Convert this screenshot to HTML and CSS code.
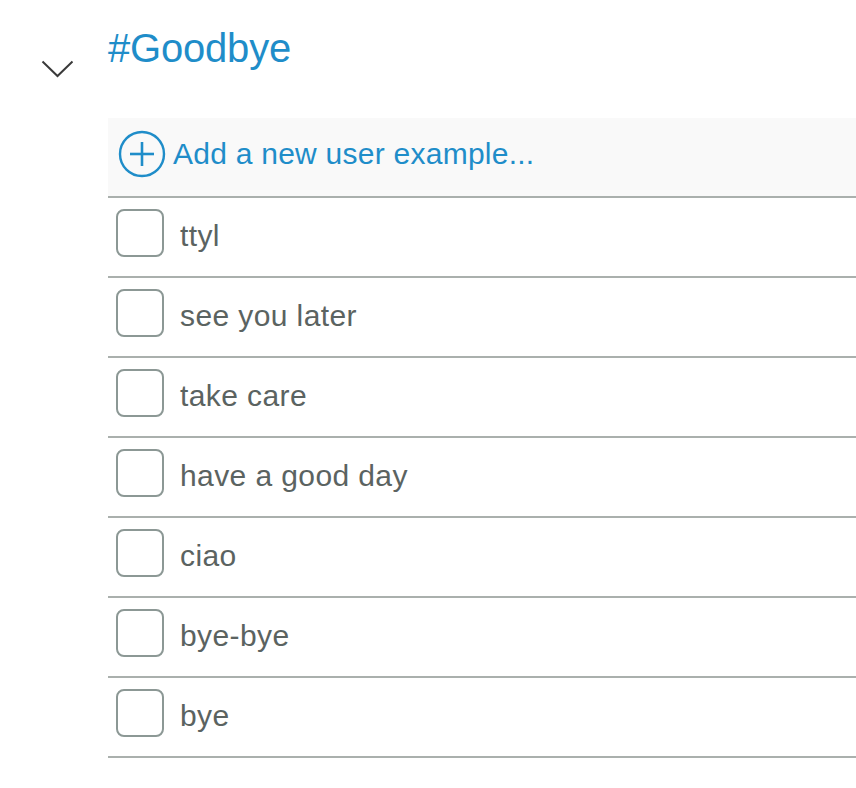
FILE: index.html
```html
<!DOCTYPE html>
<html lang="en">
<head>
<meta charset="utf-8">
<title>#Goodbye</title>
<link rel="stylesheet" href="styles.css">
</head>
<body>
<div class="intent">
  <div class="toggle">
    <svg class="chevron" width="33" height="18" viewBox="0 0 33 18" aria-hidden="true">
      <polyline points="1.5,1.5 16.5,16 31.5,1.5" fill="none" stroke="#3a3a3a" stroke-width="2"/>
    </svg>
  </div>
  <div class="content">
    <h1 class="title">#Goodbye</h1>
    <div class="add-row">
      <svg class="plus" width="48" height="48" viewBox="0 0 48 48" aria-hidden="true">
        <circle cx="24" cy="24" r="22" fill="none" stroke="#1f8dc9" stroke-width="2.4"/>
        <line x1="12" y1="24" x2="36" y2="24" stroke="#1f8dc9" stroke-width="2.6"/>
        <line x1="24" y1="12" x2="24" y2="36" stroke="#1f8dc9" stroke-width="2.6"/>
      </svg>
      <span class="add-label">Add a new user example...</span>
    </div>
    <ul class="examples">
      <li class="example"><span class="check"></span><span class="label">ttyl</span></li>
      <li class="example"><span class="check"></span><span class="label">see you later</span></li>
      <li class="example"><span class="check"></span><span class="label">take care</span></li>
      <li class="example"><span class="check"></span><span class="label">have a good day</span></li>
      <li class="example"><span class="check"></span><span class="label">ciao</span></li>
      <li class="example"><span class="check"></span><span class="label">bye-bye</span></li>
      <li class="example"><span class="check"></span><span class="label">bye</span></li>
    </ul>
  </div>
</div>
</body>
</html>
```

FILE: styles.css
```css
html, body {
  margin: 0;
  padding: 0;
  background: #ffffff;
}

body {
  font-family: "Liberation Sans", Arial, Helvetica, sans-serif;
}

.intent {
  display: flex;
  align-items: flex-start;
}

.toggle {
  width: 108px;
  flex: 0 0 108px;
  padding-top: 60px;
  box-sizing: border-box;
}

.chevron {
  display: block;
  margin-left: 41px;
}

.content {
  flex: 1;
  min-width: 0;
}

.title {
  margin: 24px 0 46px 0;
  font-size: 40px;
  line-height: 48px;
  font-weight: normal;
  color: #1f8dc9;
  letter-spacing: -0.2px;
}

.add-row {
  display: flex;
  align-items: center;
  height: 56px;
  padding: 8px 0 14px 10px;
  background: #f9f9f9;
  border-bottom: 2px solid #aab0ad;
  gap: 7px;
}

.plus {
  display: block;
  flex: 0 0 auto;
}

.add-label {
  font-size: 30px;
  line-height: 36px;
  color: #1f8dc9;
  letter-spacing: 0.25px;
}

.examples {
  list-style: none;
  margin: 0;
  padding: 0;
}

.example {
  display: flex;
  align-items: flex-start;
  padding: 11px 0 0 8px;
  box-sizing: content-box;
  border-bottom: 2px solid #aab0ad;
  height: 67px;
}

.check {
  display: block;
  width: 48px;
  height: 48px;
  box-sizing: border-box;
  border: 2px solid #8c9895;
  border-radius: 8px;
  flex: 0 0 auto;
}

.label {
  margin-left: 16px;
  padding-top: 3px;
  font-size: 30px;
  line-height: 48px;
  color: #5b6361;
  letter-spacing: 0.4px;
}
```
